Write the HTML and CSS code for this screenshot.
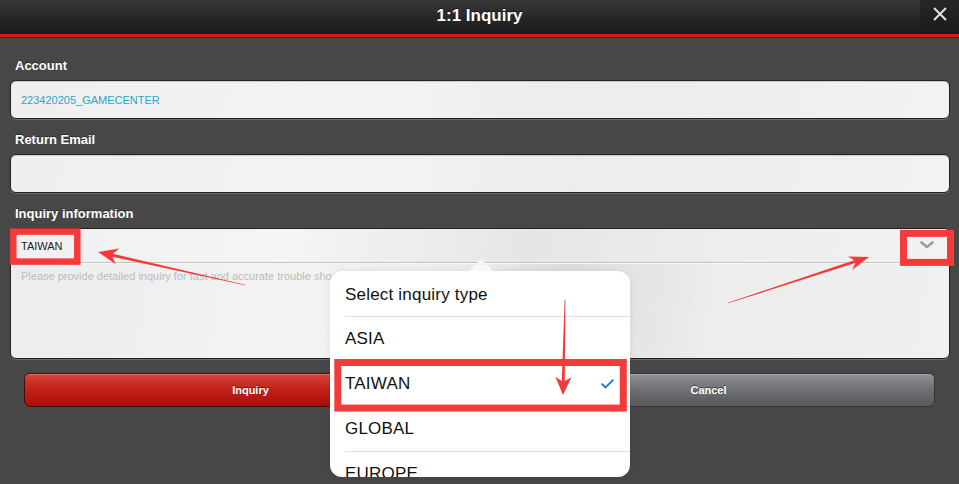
FILE: index.html
```html
<!DOCTYPE html>
<html lang="en">
<head>
<meta charset="utf-8">
<title>1:1 Inquiry</title>
<link rel="stylesheet" href="styles.css">
</head>
<body>
<div class="app">
  <header class="topbar">
    <div class="spacer"></div>
    <h1 class="title">1:1 Inquiry</h1>
    <button class="close" aria-label="Close">
      <svg width="14" height="14" viewBox="0 0 14 14"><path d="M1 1 L13 13 M13 1 L1 13" stroke="#e2e2e2" stroke-width="2" fill="none"/></svg>
    </button>
  </header>

  <main class="form">
    <div class="field">
      <div class="label">Account</div>
      <div class="input account">223420205_GAMECENTER</div>
    </div>
    <div class="field">
      <div class="label">Return Email</div>
      <div class="input"></div>
    </div>
    <div class="field">
      <div class="label">Inquiry information</div>
      <div class="inquiry-box">
        <div class="select-row">
          <span class="select-value">TAIWAN</span>
          <svg class="chevron" width="14" height="8" viewBox="0 0 14 8"><path d="M1.5 1.5 L7 6 L12.5 1.5" stroke="#9c9c9c" stroke-width="2.6" fill="none" stroke-linecap="round" stroke-linejoin="round"/></svg>
        </div>
        <div class="placeholder">Please provide detailed inquiry for fast and accurate trouble shooting.</div>
      </div>
    </div>
    <div class="actions">
      <button class="btn btn-red">Inquiry</button>
      <button class="btn btn-grey">Cancel</button>
    </div>
  </main>

  <div class="popover">
    <div class="pop-arrow"></div>
    <ul class="pop-list">
      <li class="pop-item"><div class="pop-inner">Select inquiry type</div></li>
      <li class="pop-item"><div class="pop-inner">ASIA</div></li>
      <li class="pop-item"><div class="pop-inner">TAIWAN
        <svg class="check" width="13" height="10" viewBox="0 0 13 10"><path d="M1.2 5.2 L4.6 8.4 L11.8 1.2" stroke="#1f7fe0" stroke-width="2" fill="none" stroke-linecap="round" stroke-linejoin="round"/></svg></div></li>
      <li class="pop-item"><div class="pop-inner">GLOBAL</div></li>
      <li class="pop-item"><div class="pop-inner">EUROPE</div></li>
    </ul>
  </div>

  <svg class="annot" width="959" height="484" viewBox="0 0 959 484">
    <g fill="none" stroke="#f43b3b">
      <rect x="13.3" y="231.6" width="64" height="30" stroke-width="6.5"/>
      <rect x="903.5" y="233.4" width="47" height="29" stroke-width="7"/>
      <rect x="337.8" y="362.5" width="285.5" height="45.6" stroke-width="7"/>
    </g>
    <g fill="#f43b3b">
      <polygon points="245.1,284.7 112.9,253.8 119.3,248.6 98,252 115.8,264.2 112.3,256.8 244.9,285.3"/>
      <polygon points="728.1,303.3 855.2,263.1 852.2,269.9 869,257 847.8,256.5 854.2,260.2 727.9,302.7"/>
      <polygon points="564.6,300 561.8,381 555.4,376.8 563,395 571.4,377.2 564.8,381 565.4,300"/>
    </g>
  </svg>
</div>
</body>
</html>
```

FILE: styles.css
```css
* { box-sizing: border-box; margin: 0; padding: 0; }

html, body {
  width: 959px;
  height: 484px;
  overflow: hidden;
  background: #474747;
}

body {
  font-family: "Liberation Sans", Arial, Helvetica, sans-serif;
}

.app {
  position: relative;
  width: 959px;
  height: 484px;
  background: #474747;
}

.topbar {
  height: 37px;
  display: grid;
  grid-template-columns: 39px 1fr 39px;
  background: linear-gradient(to bottom, #383838 0%, #262626 55%, #1b1b1b 100%);
  border-bottom: 3px solid #d3191a;
  box-shadow: 0 1px 0 #5a1a1a;
}

.title {
  text-align: center;
  color: #ffffff;
  font-size: 17px;
  font-weight: bold;
  line-height: 32px;
  text-shadow: 0 -1px 0 rgba(0,0,0,0.6);
}

.close {
  border: none;
  background: linear-gradient(to bottom, #262626, #1a1a1a);
  display: flex;
  align-items: center;
  justify-content: center;
  padding-bottom: 6px;
}

.form {
  padding: 21px 9px 0 10px;
  display: flex;
  flex-direction: column;
}

.field {
  display: flex;
  flex-direction: column;
  margin-bottom: 13px;
}

.label {
  color: #ffffff;
  font-size: 13px;
  font-weight: bold;
  line-height: 16px;
  padding-left: 5px;
  margin-bottom: 6px;
  text-shadow: 0 -1px 0 rgba(0,0,0,0.4);
}

.input {
  height: 39px;
  border: 1px solid #222;
  border-radius: 6px;
  background: linear-gradient(100deg, #efefef 0%, #f3f3f3 40%, #ececec 60%, #f2f2f2 100%);
  box-shadow: inset 0 1px 1px rgba(0,0,0,0.15), 0 1px 0 #6a6a6a;
  font-size: 11px;
  line-height: 38px;
  padding-left: 10px;
}

.account {
  color: #2aa6c8;
}

.inquiry-box {
  height: 131px;
  border: 1px solid #222;
  border-radius: 6px;
  background: linear-gradient(100deg, #ececec 0%, #f3f3f3 30%, #ebebeb 50%, #dcdcdc 58%, #ededed 75%, #f0f0f0 100%);
  box-shadow: 0 1px 0 #6a6a6a;
  overflow: hidden;
}

.select-row {
  height: 34px;
  display: flex;
  align-items: center;
  justify-content: space-between;
  padding: 0 15px 0 10px;
  border-bottom: 1px solid #c3c3c3;
  box-shadow: 0 1px 0 #f8f8f8;
  background: linear-gradient(100deg, #f0f0f0 0%, #f4f4f4 30%, #e6e6e6 55%, #eeeeee 80%, #f2f2f2 100%);
}

.select-value {
  font-size: 11px;
  color: #222;
}

.chevron {
  margin-top: -2px;
}

.placeholder {
  font-size: 11px;
  color: #bcbcbc;
  padding: 7px 0 0 10px;
  white-space: nowrap;
}

.actions {
  display: flex;
  gap: 5px;
  margin: 1px 15px 0 14px;
}

.btn {
  flex: 1;
  height: 34px;
  border-radius: 6px;
  font-family: "Liberation Sans", Arial, sans-serif;
  font-size: 11px;
  font-weight: bold;
  color: #ffffff;
  text-shadow: 0 -1px 0 rgba(0,0,0,0.5);
}

.btn-red {
  border: 1px solid #3c0f0c;
  background: linear-gradient(to bottom, #d9423a 0%, #c2231b 45%, #a70e07 100%);
  box-shadow: inset 0 1px 0 rgba(255,255,255,0.25);
}

.btn-grey {
  border: 1px solid #333;
  background: linear-gradient(to bottom, #8f9195 0%, #6d6f73 50%, #56585c 100%);
  box-shadow: inset 0 1px 0 rgba(255,255,255,0.25);
}

.popover {
  position: absolute;
  left: 330px;
  top: 271px;
  width: 300px;
  height: 206px;
}

.pop-arrow {
  position: absolute;
  left: 139px;
  top: -12px;
  width: 0;
  height: 0;
  border-left: 12px solid transparent;
  border-right: 12px solid transparent;
  border-bottom: 12px solid #f7f7f7;
}

.pop-list {
  list-style: none;
  background: #ffffff;
  border-radius: 12px;
  height: 206px;
  overflow: hidden;
  box-shadow: 0 0 6px rgba(0,0,0,0.08);
}

.pop-item {
  padding-left: 15px;
}

.pop-inner {
  height: 45px;
  display: flex;
  align-items: center;
  justify-content: space-between;
  padding-right: 16px;
  border-bottom: 1px solid #dedede;
  font-family: "Liberation Sans", Arial, sans-serif;
  font-size: 17px;
  letter-spacing: 0.2px;
  color: #111;
}

.pop-item:first-child .pop-inner {
  height: 46px;
  padding-top: 2px;
}

.annot {
  position: absolute;
  left: 0;
  top: 0;
  pointer-events: none;
}
```
